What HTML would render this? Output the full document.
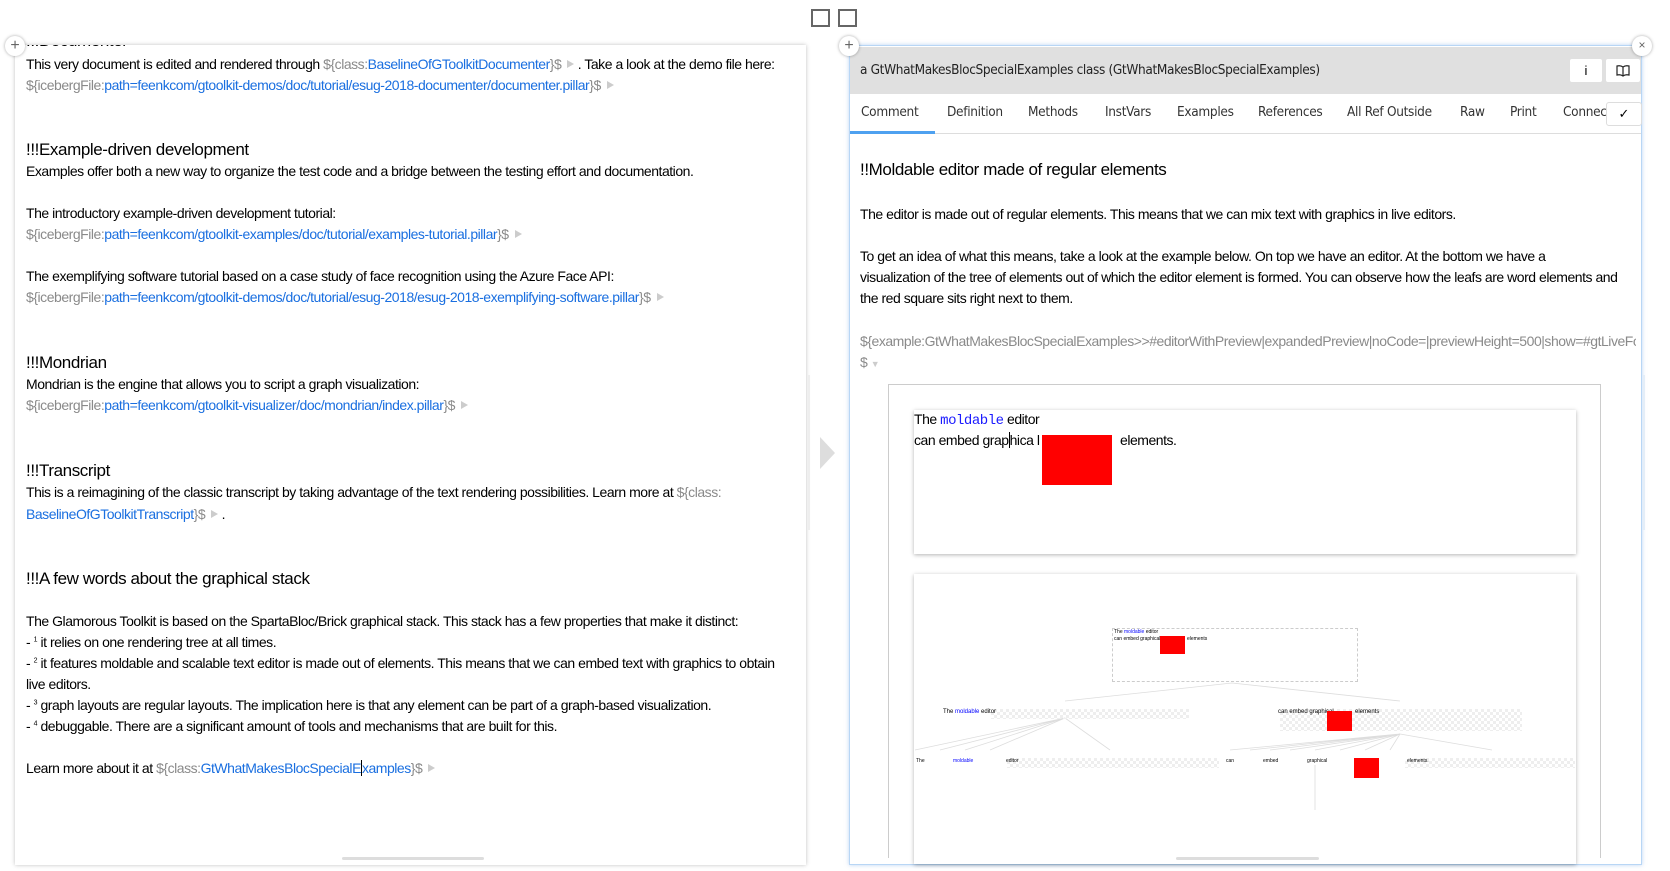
<!DOCTYPE html>
<html><head><meta charset="utf-8"><style>
*{margin:0;padding:0;box-sizing:border-box}
body{width:1670px;height:871px;background:#fff;position:relative;overflow:hidden;font-family:"Liberation Sans",sans-serif;color:#000}
.a{position:absolute;white-space:nowrap}
.t{font-size:14px;letter-spacing:-0.47px}
.h{font-size:17px;letter-spacing:-0.4px}
.g{color:#8a8a8a}.b{color:#1a6fe0}
.tri{display:inline-block;width:0;height:0;border-left:7px solid #ccc;border-top:4px solid transparent;border-bottom:4px solid transparent;margin-left:6px;vertical-align:1px}
.panel{position:absolute;background:#fff}
.circ{position:absolute;width:20px;height:20px;border-radius:50%;background:#fff;box-shadow:0 0 3px rgba(0,0,0,.35);font-size:16px;line-height:19px;text-align:center;color:#666}
.tab{position:absolute;top:104px;font-size:13.5px;color:#333;font-family:"DejaVu Sans Condensed","DejaVu Sans",sans-serif;letter-spacing:-0.3px}
.s{font-family:"DejaVu Sans Condensed","DejaVu Sans",sans-serif}
.chk{background-image:linear-gradient(45deg,#eee 25%,transparent 25%,transparent 75%,#eee 75%),linear-gradient(45deg,#eee 25%,transparent 25%,transparent 75%,#eee 75%);background-size:6px 6px;background-position:0 0,3px 3px;position:absolute}
</style></head><body>

<div class="a" style="left:811px;top:9px;width:19px;height:18px;border:2px solid #666"></div>
<div class="a" style="left:838px;top:9px;width:19px;height:18px;border:2px solid #666"></div>

<!-- left panel -->
<div class="panel" style="left:15px;top:45px;width:791px;height:820px;box-shadow:0 0 4px rgba(0,0,0,.25);overflow:hidden">
<div class="a h" style="left:11px;top:-14px">!!!Documenter</div>
</div>
<div class="a t" style="left:26px;top:56px">This very document is edited and rendered through <span class="g">${class:</span><span class="b">BaselineOfGToolkitDocumenter</span><span class="g">}$</span><span class="tri"></span> . Take a look at the demo file here:</div>
<div class="a t" style="left:26px;top:77px"><span class="g">${icebergFile:</span><span class="b">path=feenkcom/gtoolkit-demos/doc/tutorial/esug-2018-documenter/documenter.pillar</span><span class="g">}$</span><span class="tri"></span></div>
<div class="a h" style="left:26px;top:140px">!!!Example-driven development</div>
<div class="a t" style="left:26px;top:163px">Examples offer both a new way to organize the test code and a bridge between the testing effort and documentation.</div>
<div class="a t" style="left:26px;top:205px">The introductory example-driven development tutorial:</div>
<div class="a t" style="left:26px;top:226px"><span class="g">${icebergFile:</span><span class="b">path=feenkcom/gtoolkit-examples/doc/tutorial/examples-tutorial.pillar</span><span class="g">}$</span><span class="tri"></span></div>
<div class="a t" style="left:26px;top:268px">The exemplifying software tutorial based on a case study of face recognition using the Azure Face API:</div>
<div class="a t" style="left:26px;top:289px"><span class="g">${icebergFile:</span><span class="b">path=feenkcom/gtoolkit-demos/doc/tutorial/esug-2018/esug-2018-exemplifying-software.pillar</span><span class="g">}$</span><span class="tri"></span></div>
<div class="a h" style="left:26px;top:353px">!!!Mondrian</div>
<div class="a t" style="left:26px;top:376px">Mondrian is the engine that allows you to script a graph visualization:</div>
<div class="a t" style="left:26px;top:397px"><span class="g">${icebergFile:</span><span class="b">path=feenkcom/gtoolkit-visualizer/doc/mondrian/index.pillar</span><span class="g">}$</span><span class="tri"></span></div>
<div class="a h" style="left:26px;top:461px">!!!Transcript</div>
<div class="a t" style="left:26px;top:484px">This is a reimagining of the classic transcript by taking advantage of the text rendering possibilities. Learn more at <span class="g">${class:</span></div>
<div class="a t" style="left:26px;top:506px"><span class="b">BaselineOfGToolkitTranscript</span><span class="g">}$</span><span class="tri"></span> .</div>
<div class="a h" style="left:26px;top:569px">!!!A few words about the graphical stack</div>
<div class="a t" style="left:26px;top:613px">The Glamorous Toolkit is based on the SpartaBloc/Brick graphical stack. This stack has a few properties that make it distinct:</div>
<div class="a t" style="left:26px;top:634px">- <sup style="font-size:7px">1</sup> it relies on one rendering tree at all times.</div>
<div class="a t" style="left:26px;top:655px">- <sup style="font-size:7px">2</sup> it features moldable and scalable text editor is made out of elements. This means that we can embed text with graphics to obtain</div>
<div class="a t" style="left:26px;top:676px">live editors.</div>
<div class="a t" style="left:26px;top:697px">- <sup style="font-size:7px">3</sup> graph layouts are regular layouts. The implication here is that any element can be part of a graph-based visualization.</div>
<div class="a t" style="left:26px;top:718px">- <sup style="font-size:7px">4</sup> debuggable. There are a significant amount of tools and mechanisms that are built for this.</div>
<div class="a t" style="left:26px;top:760px">Learn more about it at <span class="g">${class:</span><span class="b">GtWhatMakesBlocSpecialE<span style="border-left:1px solid #000"></span>xamples</span><span class="g">}$</span><span class="tri"></span></div>
<div class="a" style="left:342px;top:857px;width:142px;height:3px;background:#ddd;border-radius:2px"></div>
<div class="a" style="left:808px;top:375px;width:2px;height:155px;background:#eee"></div>
<div class="circ" style="left:5px;top:36px">+</div>

<!-- middle arrow -->
<div class="a" style="left:820px;top:437px;width:0;height:0;border-left:15px solid #ddd;border-top:16px solid transparent;border-bottom:16px solid transparent"></div>

<!-- right panel -->
<div class="panel" style="left:849px;top:45px;width:793px;height:820px;border:1px solid #b8d6f5;box-shadow:0 0 4px rgba(120,170,230,.5)"></div>
<div class="a" style="left:850px;top:47px;width:791px;height:47px;background:#e0e0e0"></div>
<div class="a s" style="left:860px;top:62px;font-size:13.5px;color:#222;letter-spacing:-0.35px">a GtWhatMakesBlocSpecialExamples class (GtWhatMakesBlocSpecialExamples)</div>
<div class="a" style="left:1570px;top:59px;width:32px;height:23px;background:#fff;border-radius:2px;text-align:center;font-size:13px;line-height:23px">i</div>
<div class="a" style="left:1606px;top:59px;width:34px;height:23px;background:#fff;border-radius:2px"><svg width="34" height="23"><path d="M17 8c-2-1.5-4-1.5-6-1v9c2-.5 4-.5 6 1c2-1.5 4-1.5 6-1v-9c-2-.5-4-.5-6 1zM17 8v9" fill="none" stroke="#222" stroke-width="1.2"/></svg></div>
<div class="tab" style="left:861px">Comment</div>
<div class="tab" style="left:947px">Definition</div>
<div class="tab" style="left:1028px">Methods</div>
<div class="tab" style="left:1105px">InstVars</div>
<div class="tab" style="left:1177px">Examples</div>
<div class="tab" style="left:1258px">References</div>
<div class="tab" style="left:1347px">All Ref Outside</div>
<div class="tab" style="left:1460px">Raw</div>
<div class="tab" style="left:1510px">Print</div>
<div class="tab" style="left:1563px;width:44px;overflow:hidden">Connections</div>
<div class="a" style="left:1606px;top:102px;width:36px;height:24px;background:#fff;border:1px solid #ddd;border-radius:3px;text-align:center;font-size:13px;line-height:22px">✓</div>
<div class="a" style="left:850px;top:133px;width:791px;height:1px;background:#ddd"></div>
<div class="a" style="left:850px;top:131px;width:85px;height:3px;background:#4ea1f0"></div>

<div class="a h" style="left:860px;top:160px">!!Moldable editor made of regular elements</div>
<div class="a t" style="left:860px;top:206px">The editor is made out of regular elements. This means that we can mix text with graphics in live editors.</div>
<div class="a t" style="left:860px;top:248px">To get an idea of what this means, take a look at the example below. On top we have an editor. At the bottom we have a</div>
<div class="a t" style="left:860px;top:269px">visualization of the tree of elements out of which the editor element is formed. You can observe how the leafs are word elements and</div>
<div class="a t" style="left:860px;top:290px">the red square sits right next to them.</div>
<div class="a t g" style="left:860px;top:333px;width:776px;overflow:hidden">${example:GtWhatMakesBlocSpecialExamples&gt;&gt;#editorWithPreview|expandedPreview|noCode=|previewHeight=500|show=#gtLiveFor</div>
<div class="a t g" style="left:860px;top:354px">$ <span style="font-size:9px;color:#ccc">▼</span></div>

<div class="a" style="left:888px;top:384px;width:713px;height:474px;border:1px solid #ccc;border-bottom:none"></div>
<div class="a" style="left:914px;top:410px;width:662px;height:144px;background:#fff;box-shadow:0 1px 4px rgba(0,0,0,.3)"></div>
<div class="a t" style="left:914px;top:411px">The <span style="font-family:'Liberation Mono',monospace;color:#1a1aff">moldable</span> editor</div>
<div class="a t" style="left:914px;top:432px">can embed grap<span style="border-left:1px solid #000"></span>hica l</div>
<div class="a" style="left:1042px;top:435px;width:70px;height:50px;background:#f00"></div>
<div class="a t" style="left:1120px;top:432px">elements.</div>

<div class="a" style="left:914px;top:574px;width:662px;height:290px;background:#fff;box-shadow:0 1px 4px rgba(0,0,0,.3)"></div>
<div class="a" style="left:1112px;top:628px;width:246px;height:54px;border:1px dashed #ccc"></div>
<div class="a" style="left:1114px;top:629px;font-size:5px">The <span style="color:#00f">moldable</span> editor</div>
<div class="a" style="left:1114px;top:636px;font-size:5px">can embed graphical</div>
<div class="a" style="left:1160px;top:636px;width:25px;height:18px;background:#f00"></div>
<div class="a" style="left:1187px;top:636px;font-size:5px">elements</div>
<svg class="a" style="left:895px;top:600px" width="700" height="260">
<g stroke="#ddd" stroke-width="0.8" fill="none">
<path d="M337 83L170 101M337 83L505 101M170 118L20 150M170 118L45 150M170 118L70 150M170 118L95 150M170 118L215 150M505 134L335 150M505 134L355 150M505 134L375 150M505 134L395 150M505 134L420 150M505 134L445 150M505 134L470 150M505 134L495 150M505 134L597 150M420 165L420 210"/></g></svg>
<div class="chk" style="left:991px;top:709px;width:198px;height:10px"></div>
<div class="a" style="left:943px;top:709px;font-size:6px">The <span style="color:#00f">moldable</span> editor</div>
<div class="chk" style="left:1280px;top:709px;width:242px;height:22px"></div>
<div class="a" style="left:1278px;top:709px;font-size:6px">can embed graphical</div>
<div class="a" style="left:1327px;top:711px;width:25px;height:20px;background:#f00"></div>
<div class="a" style="left:1355px;top:709px;font-size:6px">elements</div>
<div class="chk" style="left:1007px;top:758px;width:212px;height:10px"></div>
<div class="chk" style="left:1405px;top:758px;width:170px;height:10px"></div>
<div class="a" style="left:916px;top:758px;font-size:5px">The</div>
<div class="a" style="left:953px;top:758px;font-size:5px;color:#00f">moldable</div>
<div class="a" style="left:1006px;top:758px;font-size:5px">editor</div>
<div class="a" style="left:1226px;top:758px;font-size:5px">can</div>
<div class="a" style="left:1263px;top:758px;font-size:5px">embed</div>
<div class="a" style="left:1307px;top:758px;font-size:5px">graphical</div>
<div class="a" style="left:1354px;top:758px;width:25px;height:20px;background:#f00"></div>
<div class="a" style="left:1407px;top:758px;font-size:5px">elements.</div>
<div class="a" style="left:1176px;top:857px;width:143px;height:3px;background:#ddd;border-radius:2px"></div>
<div class="a" style="left:1643px;top:375px;width:2px;height:155px;background:#e4eef8"></div>

<div class="circ" style="left:839px;top:36px">+</div>
<div class="circ" style="left:1632px;top:36px;font-size:12px">×</div>
</body></html>
